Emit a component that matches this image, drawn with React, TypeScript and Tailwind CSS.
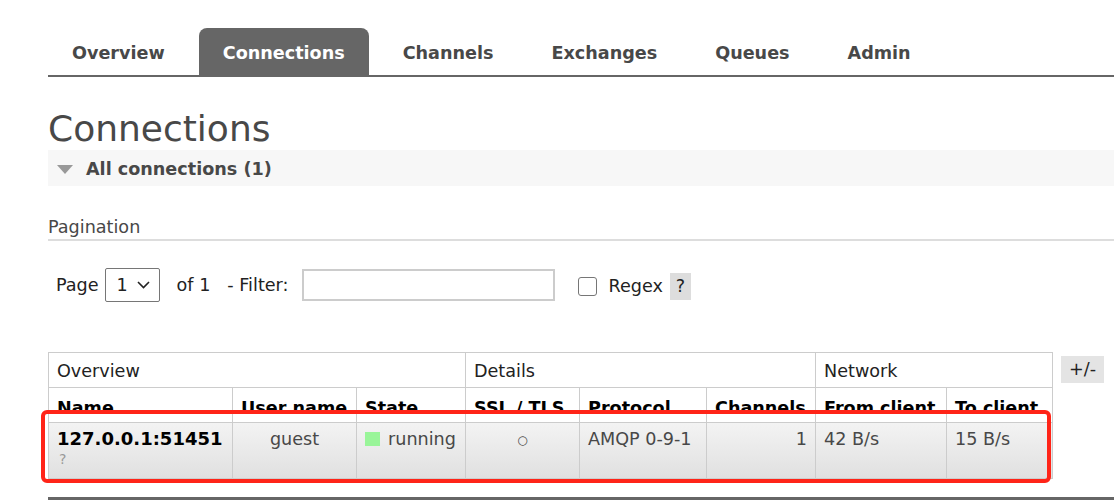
import React from "react";

const tabs = ["Overview", "Connections", "Channels", "Exchanges", "Queues", "Admin"];

function HeadCell({ children }: { children: React.ReactNode }) {
  return (
    <th className="border border-[#ccc] p-0 text-left align-top font-bold text-black">
      <div className="mt-[9px] h-[14px] overflow-hidden px-[8px] leading-[22px] whitespace-nowrap">
        {children}
      </div>
    </th>
  );
}

export default function App() {
  const cols = [184, 124, 109, 114, 127, 109, 131, 106];
  return (
    <div className="relative h-[504px] w-[1114px] overflow-hidden bg-white font-['DejaVu_Sans',Verdana,sans-serif] text-[17.6px] text-[#484848]">
      <div className="pl-12">
        {/* Tabs */}
        <div className="flex gap-[10px] border-b-2 border-[#666] pt-[28px]">
          {tabs.map((t) => (
            <div
              key={t}
              className={
                t === "Connections"
                  ? "flex h-[47px] items-center rounded-t-[8px] bg-[#666] px-6 pt-[3px] font-bold text-white"
                  : "flex h-[47px] items-center px-6 pt-[3px] font-bold text-[#484848]"
              }
            >
              {t}
            </div>
          ))}
        </div>

        {/* Title */}
        <h1 className="mt-[31px] h-[42px] text-[36px] leading-[42px] font-normal text-[#484848]">
          Connections
        </h1>

        {/* Section bar */}
        <div className="flex h-[36px] items-center bg-[#f7f7f7] pl-[9px] pt-[3px]">
          <svg width="16" height="9" viewBox="0 0 16 9" className="mr-[13px]">
            <polygon points="0,0 16,0 8,9" fill="#999" />
          </svg>
          <span className="font-bold text-[#484848]">All connections (1)</span>
        </div>

        {/* Pagination label */}
        <div className="mt-[30px] border-b-2 border-[#ddd] pb-[1px] leading-[22px] text-[#484848]">
          Pagination
        </div>

        {/* Pagination controls */}
        <div className="mt-[27px] flex h-[34px] items-center pl-[8px] text-[#222]">
          <span>Page</span>
          <div className="ml-[6px] flex h-[34px] w-[55px] items-center rounded-[2px] border border-[#767676] bg-white pl-[11px]">
            <span>1</span>
            <svg width="13" height="8" viewBox="0 0 13 8" className="ml-[9px]">
              <polyline points="1,1 6.5,6.5 12,1" fill="none" stroke="#222" strokeWidth="1.6" />
            </svg>
          </div>
          <span className="ml-[17px]">of 1</span>
          <span className="ml-[17px]">- Filter:</span>
          <div className="ml-[14px] h-[32px] w-[253px] border-2 border-[#ccc] bg-white" />
          <div className="ml-[23px] mt-[2px] h-[19px] w-[19px] rounded-[3px] border border-[#767676] bg-white" />
          <span className="ml-[11px] mt-[3px]">Regex</span>
          <div className="ml-[7px] mt-[3px] flex h-[27px] w-[21px] items-center justify-center bg-[#ddd]">
            ?
          </div>
        </div>

        {/* Table */}
        <div className="mt-[50px] flex items-start">
          <table className="w-[1004px] table-fixed border-collapse">
            <colgroup>
              {cols.map((w, i) => (
                <col key={i} style={{ width: w }} />
              ))}
            </colgroup>
            <thead>
              <tr className="h-[35px]">
                <th colSpan={3} className="border border-[#ccc] px-[8px] pt-[3px] text-left font-normal text-[#222]">
                  Overview
                </th>
                <th colSpan={3} className="border border-[#ccc] px-[8px] pt-[3px] text-left font-normal text-[#222]">
                  Details
                </th>
                <th colSpan={2} className="border border-[#ccc] px-[8px] pt-[3px] text-left font-normal text-[#222]">
                  Network
                </th>
              </tr>
              <tr className="h-[35px]">
                <HeadCell>Name</HeadCell>
                <HeadCell>User name</HeadCell>
                <HeadCell>State</HeadCell>
                <HeadCell>SSL / TLS</HeadCell>
                <HeadCell>Protocol</HeadCell>
                <HeadCell>Channels</HeadCell>
                <HeadCell>From client</HeadCell>
                <HeadCell>To client</HeadCell>
              </tr>
            </thead>
            <tbody>
              <tr className="h-[56px] bg-gradient-to-b from-[#f3f3f3] to-[#e0e0e0] align-top leading-[22px]">
                <td className="border border-[#ccc] px-[8px] pt-[5px]">
                  <div className="text-[18px] font-bold whitespace-nowrap text-black">127.0.0.1:51451</div>
                  <div className="pl-[2px] text-[14px] leading-[18px] text-[#999]">?</div>
                </td>
                <td className="border border-[#ccc] px-[8px] pt-[5px] text-center">guest</td>
                <td className="border border-[#ccc] px-[8px] pt-[5px]">
                  <div className="flex items-center">
                    <span className="mr-[8px] inline-block h-[14px] w-[15px] bg-[#99f599]" />
                    running
                  </div>
                </td>
                <td className="border border-[#ccc] px-[8px] pt-[5px] text-center text-[12px]">
                  <div className="pt-[1px] leading-[22px]">○</div>
                </td>
                <td className="border border-[#ccc] px-[8px] pt-[5px]">AMQP 0-9-1</td>
                <td className="border border-[#ccc] px-[8px] pt-[5px] text-right">1</td>
                <td className="border border-[#ccc] px-[8px] pt-[5px]">42 B/s</td>
                <td className="border border-[#ccc] px-[8px] pt-[5px]">15 B/s</td>
              </tr>
            </tbody>
          </table>
          <div className="ml-[8px] mt-[4px] flex h-[27px] w-[43px] items-center justify-center bg-[#e4e4e4] text-[#222]">
            +/-
          </div>
        </div>

        {/* Bottom rule */}
        <div className="mt-[18px] border-b-[3px] border-[#666]" />
      </div>

      {/* Annotation rectangle */}
      <div className="pointer-events-none absolute left-[41px] top-[410px] h-[73px] w-[1010px] rounded-[6px] border-4 border-[#ff2418]" />
    </div>
  );
}
